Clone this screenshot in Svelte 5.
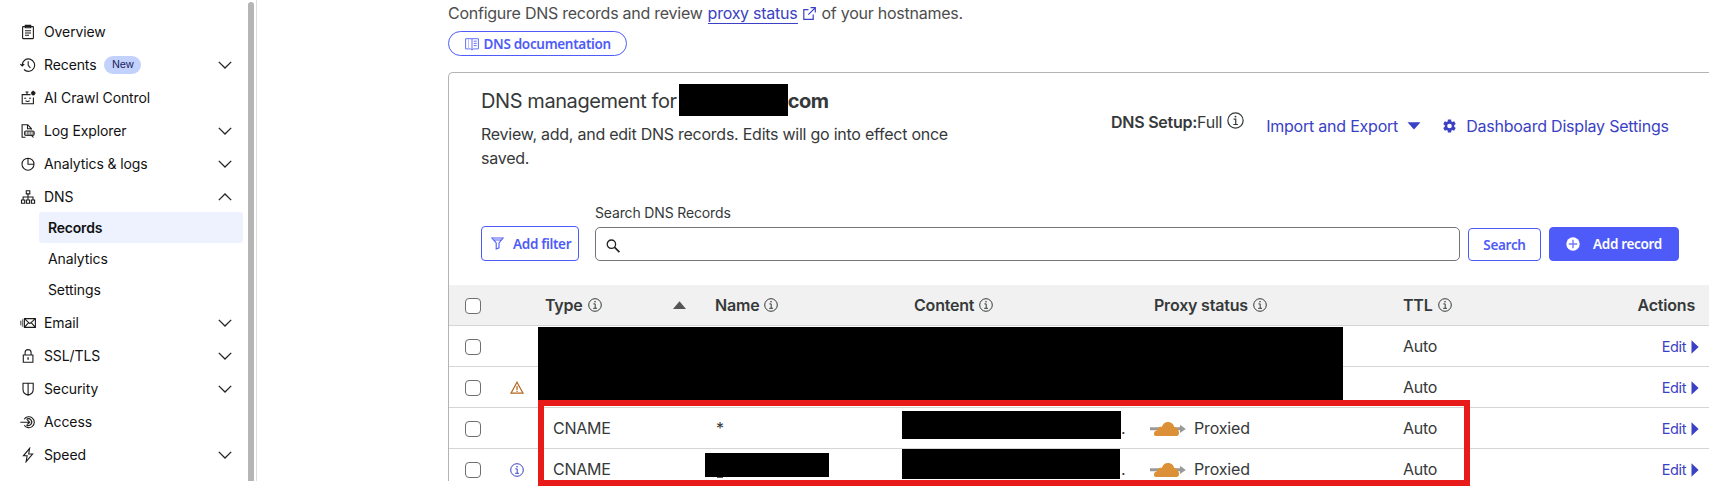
<script>
  const nav = [
    { label: 'Overview', icon: 'clipboard' },
    { label: 'Recents', icon: 'history', badge: 'New', chev: 'down' },
    { label: 'AI Crawl Control', icon: 'robot' },
    { label: 'Log Explorer', icon: 'log', chev: 'down' },
    { label: 'Analytics & logs', icon: 'pie', chev: 'down' },
    { label: 'DNS', icon: 'tree', chev: 'up', children: ['Records', 'Analytics', 'Settings'] },
    { label: 'Email', icon: 'mail', chev: 'down' },
    { label: 'SSL/TLS', icon: 'lock', chev: 'down' },
    { label: 'Security', icon: 'shield', chev: 'down' },
    { label: 'Access', icon: 'access' },
    { label: 'Speed', icon: 'bolt', chev: 'down' }
  ];
  const rows = [
    { hidden: true },
    { hidden: true, flag: 'warn' },
    { type: 'CNAME', name: '*', mask: 'a' },
    { type: 'CNAME', masked: true, flag: 'info', mask: 'b' }
  ];
</script>

{#snippet info(size)}
  <svg class="info" width={size} height={size} viewBox="0 0 14 14" fill="none" stroke="currentColor">
    <circle cx="7" cy="7" r="6.3" stroke-width="1" />
    <path d="M5.4 5.9h1.8v4.3M5.2 10.3h3.8" stroke-width="1" />
    <circle cx="7" cy="3.8" r=".8" fill="currentColor" stroke="none" />
  </svg>
{/snippet}

<div class="screen">
  <div class="view">
    <nav class="side">
      {#each nav as item}
        <div class="item">
          <svg class="ico" width="16" height="16" viewBox="0 0 16 16" fill="none" stroke="#1d1d1d" stroke-width="1.1">
            {#if item.icon === 'clipboard'}
              <rect x="2.6" y="2.6" width="10.8" height="12" rx=".5" /><path d="M5.3 2.6V1.4h5.4v2.4H5.3zM5 6.7h6M5 9h6M5 11.3h4" />
            {:else if item.icon === 'history'}
              <path d="M2.2 8.2A6.2 6.2 0 1 1 4 12.5M.4 7l1.8 2 2-2M8.2 4.3v4.1l2.2 2.4" />
            {:else if item.icon === 'robot'}
              <path d="M10.500 4.600H2.200v9.200h11.200V7.500M7 4.600V2M5.500 2h3M4.200 8.300h2M9 8.300h2M5.600 10.600c1 1.100 3 1.100 4 0" /><path d="M13.200 .8v4.800M10.900 3.200h4.700M11.700 1.700l3 3M14.700 1.700l-3 3" stroke-width="1.300" />
            {:else if item.icon === 'log'}
              <path d="M5.5 14.3H2.1V1.7h5.6l3.6 3.8v1.2M7.5 1.7v4h3.8" /><rect x="4.5" y="8" width="9.7" height="4.5" rx="1.4" fill="#888" stroke="#333" /><path d="M6.4 8.8v2.6M9.2 9.1v2M11.8 9.1v2" stroke="#fff" stroke-width=".8" /><path d="M11.5 12.3l2 2.2" />
            {:else if item.icon === 'pie'}
              <path d="M8 2.200A6 6 0 1 0 14 8.200H8zM8 2.200a6 6 0 0 1 6 6" />
            {:else if item.icon === 'tree'}
              <path d="M6.3 1.7h3.5v3.2H6.3zM1.5 11h3.2v3.2H1.5zM6.4 11h3.2v3.2H6.4zM11.4 11h3.2v3.2h-3.2zM8 5v6M3.1 11V8h9.9v3" />
            {:else if item.icon === 'mail'}
              <path d="M4.4 3.6h11v8.8h-11zM4.6 3.8l5.3 4.8 5.3-4.8M4.6 12.2l3.8-4.4M15.2 12.2l-3.8-4.4" /><path d="M2.6 4.2v7.6M.7 5.8v4.4" stroke="#777" stroke-width="1.4" />
            {:else if item.icon === 'lock'}
              <path d="M3.3 7h9.6v7.2H3.3zM5.1 7V4.6a3 3 0 0 1 6 0V7" /><path d="M8.1 9.3v2.5" stroke-width="1.3" />
            {:else if item.icon === 'shield'}
              <path d="M3 2.3h10.2v6.3c0 3-2.2 4.900-5.100 5.700C5.200 13.500 3 11.600 3 8.600zM8.100 2.300v12" />
            {:else if item.icon === 'access'}
              <path d="M.3 8.200h9M7.300 5.900l2.400 2.300-2.400 2.300M4.200 5.200a5.500 5.500 0 1 1 0 6M6.400 5.400a3.400 3.400 0 1 1 0 5.600" />
            {:else}
              <path d="M9.600 1.300L3.400 8.800h3.700l-1 5.900 6.500-7.700H8.700z" />
            {/if}
          </svg>
          <span class="label">{item.label}</span>
          {#if item.badge}<span class="badge">{item.badge}</span>{/if}
          {#if item.chev}
            <svg class="chev" class:up={item.chev === 'up'} width="14" height="8" viewBox="0 0 14 8" fill="none" stroke="#222" stroke-width="1.3"><path d="M.8 .9L7 7 13.200 .9" /></svg>
          {/if}
        </div>
        {#if item.children}
          <div class="subs">
            {#each item.children as child, i}
              <div class="sub" class:active={i === 0}>{child}</div>
            {/each}
          </div>
        {/if}
      {/each}
    </nav>
    <div class="scroll"><div class="thumb"></div></div>

    <main>
      <p class="intro">
        <span>Configure DNS records and review</span>
        <a href="#proxy">proxy status</a>
        <svg width="13" height="13" viewBox="0 0 13 13" fill="none" stroke="#3a41c4" stroke-width="1.200"><path d="M5.500 2.600H.8v9.700h9.400V7.500M7.500 .7h4.800v4.800M12.200 .8L5.300 7.700" /></svg>
        <span>of your hostnames.</span>
      </p>
      <button class="pill">
        <svg width="14" height="14" viewBox="0 0 14 14" fill="none" stroke="#6670fa" stroke-width="1"><path d="M7 1.700H.6v10.200h5L7 13l1.400-1.100h5V1.700zM7 1.700V13M8.700 4.200h3M8.700 6.400h3M8.700 8.600h3" /><path d="M3.500 2v9.700" stroke="#b9bffd" /></svg>
        <span>DNS documentation</span>
      </button>

      <section class="card">
        <div class="head">
          <div class="about">
            <h2><span>DNS management for</span><i class="mask title"></i><b>com</b></h2>
            <p>Review, add, and edit DNS records. Edits will go into effect once saved.</p>
          </div>
          <div class="setup"><b>DNS Setup:</b><span>Full</span>{@render info(17)}</div>
          <div class="link imp"><span>Import and Export</span><svg width="14" height="8" viewBox="0 0 14 8"><path d="M.5 .3h13L7 7.500z" fill="#3a41c4" /></svg></div>
          <div class="link dash">
            <svg width="13" height="14" viewBox="0 0 13 14"><path fill="#3a41c4" fill-rule="evenodd" d="M4.900.5h3.200l.3 1.900 1 .6 1.800-.7 1.500 2.700-1.500 1.200v1.600l1.500 1.200-1.500 2.700-1.800-.7-1 .6-.3 1.900H4.900l-.3-1.900-1-.6-1.800.7L.3 9l1.500-1.200V6.200L.3 5l1.500-2.700 1.800.7 1-.6zM6.500 4.700a2.300 2.300 0 1 0 0 4.600 2.300 2.300 0 0 0 0-4.600z" /></svg>
            <span>Dashboard Display Settings</span>
          </div>
        </div>

        <div class="tools">
          <button class="filter">
            <svg width="13" height="13" viewBox="0 0 13 13" fill="none" stroke="#4e5bf8" stroke-width="1.100"><path d="M.9 1h11.200L8 6v4.800L5.200 12V6zM2.500 3h8" /></svg>
            <span>Add filter</span>
          </button>
          <div class="field">
            <span class="cap">Search DNS Records</span>
            <div class="input"><svg width="14" height="14" viewBox="0 0 14 14" fill="none" stroke="#222"><circle cx="5.400" cy="5.200" r="4.200" stroke-width="1.300" /><path d="M8.400 8.200l5 5" stroke-width="1.700" /></svg></div>
          </div>
          <button class="find"><span>Search</span></button>
          <button class="add">
            <svg width="14" height="14" viewBox="0 0 14 14"><circle cx="7" cy="7" r="6.700" fill="#fff" /><path d="M7 2.800v8.400M2.800 7h8.400" stroke="#6f79fa" stroke-width="1.400" /></svg>
            <span>Add record</span>
          </button>
        </div>

        <div class="grid th">
          <div><i class="check"></i></div>
          <div></div>
          <div class="type"><span>Type</span>{@render info(14)}<svg class="sort" width="13" height="8" viewBox="0 0 13 8"><path d="M0 8L6.500 .2 13 8z" fill="#555" /></svg></div>
          <div><span>Name</span>{@render info(14)}</div>
          <div><span>Content</span>{@render info(14)}</div>
          <div><span>Proxy status</span>{@render info(14)}</div>
          <div><span>TTL</span>{@render info(14)}</div>
          <div class="act"><span>Actions</span></div>
        </div>
        {#each rows as r}
          <div class="grid tr">
            <div><i class="check"></i></div>
            <div class="flag">
              {#if r.flag === 'warn'}
                <svg width="14" height="13" viewBox="0 0 14 13" fill="none" stroke="#b5651d" stroke-width="1.200"><path d="M7 1.200L13 12.200H1zM7 5v4M7 9.800v1.200" /></svg>
              {:else if r.flag === 'info'}
                <span class="blue">{@render info(14)}</span>
              {/if}
            </div>
            <div class="ctype">{r.type ?? ''}</div>
            <div class="cname">{#if r.masked}<i class="mask name"></i>{:else}{r.name ?? ''}{/if}</div>
            <div class="ccont">{#if r.mask}<i class="mask {r.mask}"></i><span class="dot">.</span>{/if}</div>
            <div class="cprox">
              {#if !r.hidden}
                <svg width="36" height="16" viewBox="0 0 36 16"><path d="M0 6.300h30V3.800l5.800 4.100-5.800 4.100V9.300H0z" fill="#999" /><path d="M4 13.300c-.3-2.500 1-3.900 3-3.900-.3-2.500 2.500-4.700 4.800-3.300C12.700 2.900 15 1 18 1c3.500 0 5.800 2.300 6.300 5.300 2.500-.2 4 1.400 3.900 3.300.8.6 1.100 2.400.6 3.700-.3 1.200-1 1.700-2 1.700H6c-1.200 0-1.900-.7-2-1.700z" fill="#dc9037" /></svg>
                <span>Proxied</span>
              {/if}
            </div>
            <div class="cttl">Auto</div>
            <div class="act edit"><span>Edit</span><svg width="8" height="14" viewBox="0 0 8 14"><path d="M.5 .3L7.600 7 .5 13.700z" fill="#3a41c4" /></svg></div>
          </div>
        {/each}
      </section>
    </main>
  </div>
  <div class="redact"></div>
  <div class="frame"></div>
</div>

<style>
  :global(body) { background: #fff; overflow: hidden; }
  * { box-sizing: border-box; }
  .screen { position: relative; width: 1709px; height: 486px; overflow: hidden; font-family: Inter, sans-serif; color: #36393a; font-size: 16px; letter-spacing: -0.25px; }
  .view { display: flex; height: 481px; overflow: hidden; }
  svg { display: block; flex: none; }
  span, b { white-space: nowrap; }
  button { margin: 0; padding: 0; background: #fff; border: 1px solid #4e5bf8; color: #4e5bf8; font: 600 13.500px "Noto Sans", sans-serif; letter-spacing: -0.32px; border-radius: 4px; display: flex; align-items: center; flex: none; }
  .side { width: 248px; flex: none; padding: 15px 5px 0 20px; color: #111; font-size: 14px; letter-spacing: -0.11px; }
  .item { height: 33px; display: flex; align-items: center; padding-right: 11px; }
  .label { margin-left: 8px; }
  .badge { margin-left: 8px; width: 37px; height: 18px; border-radius: 9px; background: #c3d1fd; color: #1b2260; font-size: 10.500px; line-height: 18px; text-align: center; }
  .chev { margin-left: auto; }
  .up { transform: scaleY(-1); }
  .subs { margin: -1px 0 1px 19px; }
  .sub { height: 31px; line-height: 32px; padding-left: 9px; border-radius: 3px; }
  .active { background: #edf2fe; font-weight: 600; letter-spacing: -0.2px; }
  .scroll { width: 9px; flex: none; border-right: 1px solid #ddd; padding-top: 2px; }
  .thumb { width: 6px; height: 490px; border-radius: 3px; background: #b5b5b5; }
  main { width: 1261px; margin-left: 191px; flex: none; }
  .intro { margin: 0; height: 31px; display: flex; align-items: center; padding-bottom: 5px; color: #4d4d4d; }
  .intro a { color: #3a41c4; text-decoration: none; border-bottom: 1px solid #3a41c4; line-height: 20px; margin: 1px 5px 0 5px; white-space: nowrap; }
  .intro svg { margin-right: 6px; }
  .pill { width: 179px; height: 25px; border-radius: 13px; padding-left: 16px; }
  .pill span { margin-left: 4.500px; }
  .card { margin-top: 16px; height: 460px; border: 1px solid #b3b3b3; border-right: 0; border-top-left-radius: 5px; }
  .head { height: 141px; display: flex; align-items: flex-start; padding: 11px 0 0 32px; }
  .about { width: 480px; flex: none; }
  h2 { margin: 0; height: 32px; font-size: 20px; font-weight: 400; line-height: 34px; display: flex; letter-spacing: -0.42px; }
  .mask { background: #000; display: block; flex: none; }
  .title { width: 109px; height: 32px; margin-left: 2px; }
  .about p { margin: 6px 0 0; line-height: 24px; }
  .setup { display: flex; align-items: center; margin: 27px 0 0 150px; height: 22px; }
  .setup b { font-weight: 600; }
  .setup :global(svg) { margin: -3px 0 0 5px; }
  .link { display: flex; align-items: center; color: #3a41c4; height: 22px; margin-top: 31px; }
  .imp { margin-left: 22px; letter-spacing: -0.22px; }
  .imp svg { margin-left: 9px; margin-top: -1px; }
  .dash { margin-left: 22px; }
  .dash span { margin-left: 10px; letter-spacing: -0.21px; }
  .tools { height: 71px; padding: 0 30px 24px 32px; display: flex; align-items: flex-end; }
  .filter { width: 98px; height: 35px; padding-left: 9px; }
  .filter span { margin-left: 9px; }
  .field { margin-left: 16px; width: 865px; }
  .cap { display: block; font-size: 14px; line-height: 18px; margin-bottom: 5px; letter-spacing: -0.15px; }
  .input { height: 34px; border: 1px solid #757575; border-radius: 5px; padding: 11px 0 0 10px; }
  .find { margin-left: 8px; width: 73px; height: 33px; justify-content: center; }
  .add { margin-left: 8px; width: 130px; height: 34px; background: #4e5bf8; color: #fff; padding-left: 16px; }
  .add span { margin-left: 13px; }
  .grid { display: grid; grid-template-columns: 61px 35px 170px 199px 240px 249px 235px 1fr; height: 41px; border-bottom: 1px solid #d5d5d5; align-items: center; }
  .grid > div { display: flex; align-items: center; height: 100%; min-width: 0; }
  .th { background: #f1f1f1; font-weight: 600; letter-spacing: -0.2px; }
  .th :global(.info) { margin-left: 5px; }
  .sort { margin-left: 71px; }
  .check { width: 16px; height: 16px; border: 1px solid #6f6f6f; border-radius: 4px; background: #fff; margin-left: 16px; margin-top: 2px; }
  .grid > .act { justify-content: flex-end; padding-right: 14px; }
  .grid > .edit { padding-right: 10px; font-size: 14.500px; letter-spacing: -0.4px; color: #3a41c4; padding-top: 1px; }
  .edit svg { margin-left: 5px; }
  .blue { color: #3a41c4; }
  .flag svg { margin-top: 1px; }
  .ctype { padding-left: 8px; }
  .cname { padding-left: 1px; }
  .name { width: 124px; height: 24px; margin: -8px 0 0 -11px; position: relative; }
  .name::after { content: ''; position: absolute; left: 12px; bottom: -1px; width: 6px; height: 1px; background: #555; }
  .a { width: 219px; height: 28px; margin-left: -12px; margin-top: -6px; }
  .b { width: 218px; height: 30px; margin: -10px 1px 0 -12px; }
  .cprox span { margin-left: 8px; letter-spacing: -0.15px; }
  .cprox svg { margin-left: -4px; margin-top: 1px; }
  .redact { position: absolute; left: 538px; top: 327px; width: 805px; height: 74px; background: #000; }
  .frame { position: absolute; left: 538px; top: 400px; width: 932px; height: 86px; border: 6px solid #e81b1b; }
</style>
